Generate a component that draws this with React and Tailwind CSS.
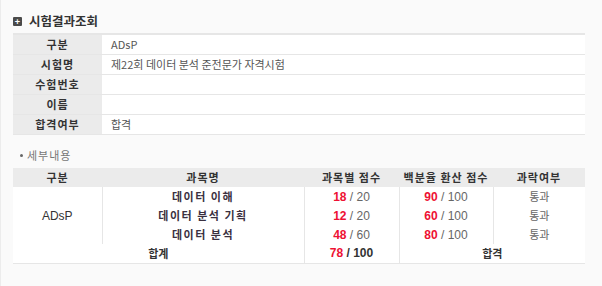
import React from "react";

const font = { fontFamily: '"Noto Sans CJK KR", "Liberation Sans", sans-serif' };

function Info() {
  const rows = [
    ["구분", "ADsP"],
    ["시험명", "제22회 데이터 분석 준전문가 자격시험"],
    ["수험번호", ""],
    ["이름", ""],
    ["합격여부", "합격"],
  ];
  return (
    <table className="w-[572px] border-collapse border-t-2 border-[#e6e6e6] text-[11px]">
      <tbody>
        {rows.map(([k, v]) => (
          <tr key={k} className="h-[20px] border-b border-[#e6e6e6]">
            <th className="w-[89px] bg-[#ebebeb] p-0 text-center font-bold text-[#333] tracking-[1px] leading-[19px]">{k}</th>
            <td className="bg-white pl-[9px] text-[#555] leading-[19px]">{v}</td>
          </tr>
        ))}
      </tbody>
    </table>
  );
}

function Score({ a, b, bold }) {
  return (
    <span className="text-[12px]">
      <span className="font-bold text-[#ee1133]">{a}</span>
      <span className={bold ? "font-bold text-[#333]" : "text-[#666]"}> / {b}</span>
    </span>
  );
}

function Detail() {
  const subj = [
    ["데이터 이해", "18", "20", "90"],
    ["데이터 분석 기획", "12", "20", "60"],
    ["데이터 분석", "48", "60", "80"],
  ];
  return (
    <table className="w-[572px] border-collapse text-[11px] text-center">
      <thead>
        <tr className="h-[19px] bg-[#ebebeb] text-[#333]">
          <th className="w-[89px] p-0 font-bold tracking-[1px]">구분</th>
          <th className="w-[202px] p-0 font-bold tracking-[1px]">과목명</th>
          <th className="w-[95px] p-0 font-bold tracking-[1px]">과목별 점수</th>
          <th className="w-[94px] p-0 font-bold tracking-[1px]">백분율 환산 점수</th>
          <th className="p-0 font-bold tracking-[1px]">과락여부</th>
        </tr>
      </thead>
      <tbody className="bg-white">
        {subj.map(([n, a, b, p], i) => (
          <tr key={n} className="h-[19px]">
            {i === 0 && (
              <td rowSpan={3} className="border-r border-[#e6e6e6] p-0 text-[12px] text-[#333]" style={{ fontFamily: '"Liberation Sans", "Noto Sans CJK KR", sans-serif' }}>
                ADsP
              </td>
            )}
            <td className="border-r border-[#e6e6e6] p-0 font-bold text-[#3a3040] tracking-[1.5px]">{n}</td>
            <td className="border-r border-[#e6e6e6] p-0" style={{ fontFamily: '"Liberation Sans", sans-serif' }}>
              <Score a={a} b={b} />
            </td>
            <td className="border-r border-[#e6e6e6] p-0" style={{ fontFamily: '"Liberation Sans", sans-serif' }}>
              <Score a={p} b="100" />
            </td>
            <td className="p-0 text-[#666]">통과</td>
          </tr>
        ))}
        <tr className="h-[19px] border-b border-[#e6e6e6]">
          <td colSpan={2} className="border-r border-[#e6e6e6] p-0 font-bold text-[#333]">합계</td>
          <td className="border-r border-[#e6e6e6] p-0" style={{ fontFamily: '"Liberation Sans", sans-serif' }}>
            <Score a="78" b="100" bold />
          </td>
          <td colSpan={2} className="p-0 font-bold text-[#333]">합격</td>
        </tr>
      </tbody>
    </table>
  );
}

export default function App() {
  return (
    <div className="w-[602px] h-[286px] bg-[#fafafa] border-l border-[#ececec] overflow-hidden" style={font}>
      <div className="pl-[12px] pt-[12px]">
        <div className="flex items-center h-[18px] mb-[3px]">
          <span className="w-[9px] h-[9px] bg-[#4a4a4a] rounded-[1px] flex items-center justify-center text-white text-[9px] font-bold leading-none mt-[1px]">+</span>
          <span className="ml-[7px] text-[12.5px] font-bold text-[#333]">시험결과조회</span>
        </div>
        <Info />
        <div className="flex items-center h-[16px] mt-[12px] mb-[5px] pl-[7px] text-[11px] text-[#777]">
          <span className="w-[3px] h-[3px] rounded-full bg-[#666] mr-[4px]"></span>
          <span className="tracking-[1px]">세부내용</span>
        </div>
        <Detail />
      </div>
    </div>
  );
}
